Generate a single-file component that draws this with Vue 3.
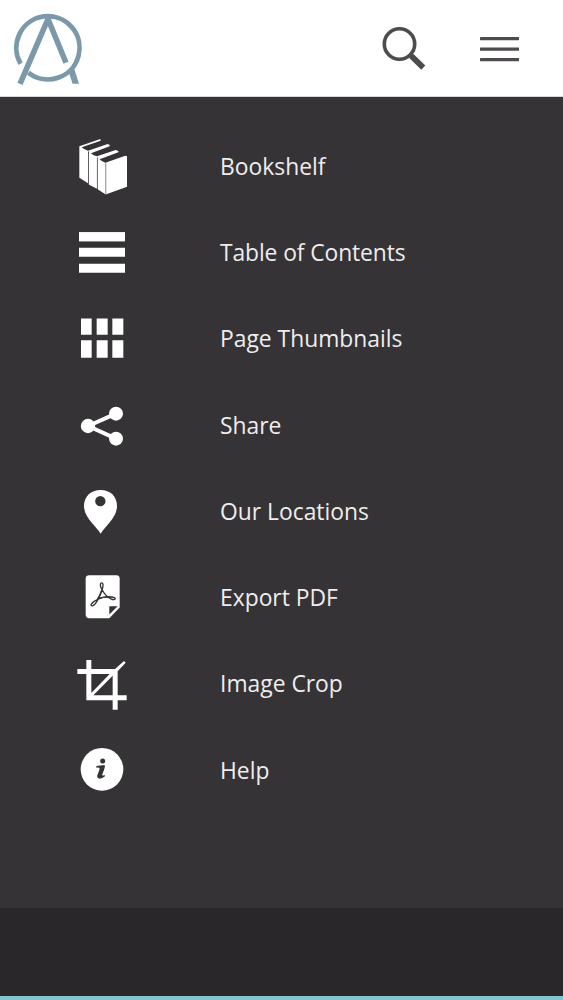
<script setup>
const labels = [
  ['books', 'Bookshelf'],
  ['contents', 'Table of Contents'],
  ['thumbs', 'Page Thumbnails'],
  ['share', 'Share'],
  ['pin', 'Our Locations'],
  ['pdf', 'Export PDF'],
  ['crop', 'Image Crop'],
  ['help', 'Help'],
]
const items = labels.map(([icon, label]) => ({ icon, label }))
</script>

<template>
  <div class="screen">
    <header class="bar">
      <svg class="logo" viewBox="0 0 96 96" fill="none" stroke="#7c99aa">
        <path d="M20.6 63.7A31.6 31.6 0 1 1 28.3 72.6" stroke-width="4.8" />
        <path d="M66 62.8L48 19L20 83.8" stroke-width="5.6" stroke-linejoin="bevel" />
        <path d="M45 17H51L48.5 22H47.5Z" fill="#7c99aa" stroke="none" />
        <path d="M68.4 71L74 68L79 83.8H72.6Z" fill="#7c99aa" stroke="none" />
      </svg>
      <svg class="search" viewBox="380 24 50 50" fill="none" stroke="#4d4b4d">
        <circle cx="399.5" cy="45" r="15.2" stroke-width="3.6" />
        <path d="M409.3 55L413 58.8" stroke-width="4.4" />
        <path d="M411.5 57.2L423.3 68.6" stroke-width="5.8" />
      </svg>
      <svg class="burger" viewBox="480 30 40 38" fill="#4d4b4d">
        <rect x="480" y="38" width="39" height="3.2" rx=".4" />
        <rect x="480" y="48.6" width="39" height="3.2" rx=".4" />
        <rect x="480" y="59" width="39" height="3.2" rx=".4" />
      </svg>
    </header>

    <nav class="menu">
      <a v-for="item in items" :key="item.label" class="item">
        <svg class="icon" viewBox="0 0 240 258.75" fill="#fff">
          <g v-if="item.icon === 'books'" transform="translate(0 6)">
            <path d="M43 64L106 42L107 47L50 67Q58 75 69 77L69 175L43 158Z" />
            <path d="M69 77L128 57L134 60L134 64L78 85Q85 92 96 94L96 191L72 179L72 82Z" />
            <path d="M96 94L152 75L160 78L160 82L104 103Q111 111 121 113L121 208L98 193L98 100Z" />
            <path d="M121 113L181 92L186 94L186 185L124 208L121 208Z" />
            <path d="M70.5 82V178M97 101V192M122.5 115V207" fill="none" stroke="#777578" stroke-width="2" />
          </g>
          <g v-else-if="item.icon === 'contents'" transform="translate(0 32.25)">
            <rect x="42" y="37" width="138" height="28" />
            <rect x="42" y="84" width="138" height="27" />
            <rect x="42" y="132" width="138" height="27" />
          </g>
          <g v-else-if="item.icon === 'thumbs'" transform="translate(0 -227.5)">
            <path d="M48 295h32v49H48zM95 295h33v49H95zM142 295h33v49h-33zM48 360h32v53H48zM95 360h33v53H95zM142 360h33v53h-33z" />
          </g>
          <g v-else-if="item.icon === 'share'" transform="translate(0 39)">
            <path d="M69 93L153 56M69 93L153 131" fill="none" stroke="#fff" stroke-width="12" />
            <circle cx="69" cy="93" r="21.5" />
            <circle cx="153" cy="56" r="21" />
            <circle cx="153" cy="131" r="21" />
          </g>
          <g v-else-if="item.icon === 'pin'" transform="translate(0 -219)">
            <path fill-rule="evenodd" d="M107 416C94 394 57 368 57 333C57 304 78 285 107 285S156 304 156 333C156 368 120 394 107 416ZM106 303A15.5 15.5 0 1 0 106 334A15.5 15.5 0 1 0 106 303Z" />
          </g>
          <g v-else-if="item.icon === 'pdf'" transform="translate(0 33.5)">
            <path d="M73 30H154Q164 30 164 40V127L133 159H73Q62 159 62 148V40Q62 30 73 30Z" />
            <path d="M133 123H158L133 148Z" fill="#353335" />
            <g fill="none" stroke="#353335" stroke-linejoin="round">
              <path d="M109 70C105 62 105 53 110 53C115 53 115 61 112 72C106 92 91 123 81 122C74 121 80 111 101 101C117 94 139 93 149 98C154 102 147 106 138 101C127 97 116 83 109 70Z" stroke-width="4" />
              <path d="M110 76Q104 94 97 103M102 100Q118 94 130 96" stroke-width="4.5" />
            </g>
          </g>
          <g v-else-if="item.icon === 'crop'" transform="translate(0 27)">
            <path d="M64 30H79V57H150L177 33L182 38L158 64V136H185V151H158V179H143V151H64V72H37V57H64Z" />
            <path d="M79 72H134L79 129ZM143 77V136H85Z" fill="#353335" />
          </g>
          <g v-else transform="translate(0 24)">
            <circle cx="111" cy="103" r="64" />
            <circle cx="113" cy="78" r="7.5" fill="#353335" />
            <path d="M94 93Q106 91 119 90Q121 95 117 105L112 118Q110 124 119 120L120 124Q112 131 103 131Q95 129 97 121L104 102Q105 97 94 98Z" fill="#353335" />
          </g>
        </svg>
        <span class="label" :class="item.icon">{{ item.label }}</span>
      </a>
    </nav>

    <footer class="foot"></footer>
  </div>
</template>

<style>
body {
  background: #353335;
}
</style>

<style scoped>
.screen {
  display: flex;
  flex-direction: column;
  height: 1000px;
  overflow: hidden;
  background: #353335;
  font-family: "Open Sans", "Noto Sans", sans-serif;
}
.bar {
  box-sizing: border-box;
  display: flex;
  align-items: center;
  height: 97px;
  flex: none;
  padding-right: 43px;
  background: #fff;
  border-bottom: 1px solid #d8d7d8;
}
.logo {
  width: 96px;
  height: 96px;
}
.search {
  width: 50px;
  height: 50px;
  margin-left: auto;
}
.burger {
  width: 40px;
  height: 38px;
  margin-left: 50px;
}
.menu {
  flex: 1;
  padding-top: 26px;
}
.item {
  display: flex;
  align-items: center;
  height: 86.25px;
  padding-left: 65px;
}
.icon {
  width: 80px;
  height: 86.25px;
  flex: none;
}
.label {
  margin-left: 75px;
  padding-top: 1.4px;
  color: #eeedee;
  font-size: 22.85px;
  line-height: 32px;
  white-space: nowrap;
}
.label.contents {
  letter-spacing: -0.1px;
}
.foot {
  box-sizing: border-box;
  height: 92px;
  flex: none;
  background: #292729;
  border-bottom: 4px solid #81c5d0;
}
</style>
